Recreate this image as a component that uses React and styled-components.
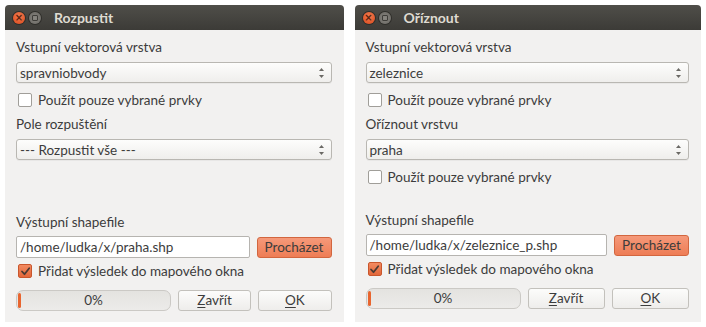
import React from 'react';
import styled, { createGlobalStyle } from 'styled-components';

const Global = createGlobalStyle`
  html, body { margin: 0; padding: 0; background: #ffffff; }
  body { font-family: Lato, "Open Sans", "DejaVu Sans", sans-serif; }
`;

function Arrows() {
  return (
    <svg width="7" height="12" viewBox="0 0 7 12">
      <path d="M3.5 1 L6 4 L1 4 Z" fill="#6a6864" />
      <path d="M3.5 11 L6 8 L1 8 Z" fill="#6a6864" />
    </svg>
  );
}

function Tick() {
  return (
    <svg width="11" height="11" viewBox="0 0 11 11">
      <path d="M2 5.5 L4.5 8.2 L9.2 2.2" fill="none" stroke="#4b3a33" strokeWidth="1.8" strokeLinecap="round" strokeLinejoin="round" />
    </svg>
  );
}

function Combo({ value }) {
  return (
    <ComboBox>
      <span>{value}</span>
      <Arrows />
    </ComboBox>
  );
}

function Check({ checked, children, mt }) {
  return (
    <CheckRow $mt={mt}>
      <Box $checked={checked}>{checked && <Tick />}</Box>
      <span>{children}</span>
    </CheckRow>
  );
}

function Dialog({ title, width, bottom, children, path }) {
  return (
    <Window $w={width}>
      <TitleBar>
        <Close>×</Close>
        <Mini />
        <Title>{title}</Title>
      </TitleBar>
      <Body $bottom={bottom}>
        {children}
        <Spacer />
        <Label $mb={5}>Výstupní shapefile</Label>
        <FileRow>
          <PathInput>{path}</PathInput>
          <Browse>Procházet</Browse>
        </FileRow>
        <Check checked mt={4}>Přidat výsledek do mapového okna</Check>
        <ButtonRow>
          <Progress>
            <Chunk />
            0%
          </Progress>
          <Btn><u>Z</u>avřít</Btn>
          <Btn><u>O</u>K</Btn>
        </ButtonRow>
      </Body>
    </Window>
  );
}

export default function App() {
  return (
    <>
      <Global />
      <Screen>
        <Dialog title="Rozpustit" width={339} bottom={11} path="/home/ludka/x/praha.shp">
          <Label>Vstupní vektorová vrstva</Label>
          <Combo value="spravniobvody" />
          <Check mt={8}>Použít pouze vybrané prvky</Check>
          <Label $mt={6}>Pole rozpuštění</Label>
          <Combo value="--- Rozpustit vše ---" />
        </Dialog>
        <Dialog title="Oříznout" width={347} bottom={13} path="/home/ludka/x/zeleznice_p.shp">
          <Label>Vstupní vektorová vrstva</Label>
          <Combo value="zeleznice" />
          <Check mt={8}>Použít pouze vybrané prvky</Check>
          <Label $mt={6}>Oříznout vrstvu</Label>
          <Combo value="praha" />
          <Check mt={8}>Použít pouze vybrané prvky</Check>
        </Dialog>
      </Screen>
    </>
  );
}

const Screen = styled.div`
  display: flex;
  gap: 11px;
  padding: 5px;
  height: 317px;
`;

const Window = styled.div`
  width: ${p => p.$w}px;
  height: 317px;
  display: flex;
  flex-direction: column;
  background: #f2f1f0;
  border-radius: 4px 4px 0 0;
  overflow: hidden;
`;

const TitleBar = styled.div`
  height: 25px;
  flex-shrink: 0;
  display: flex;
  align-items: center;
  padding-left: 8px;
  background: linear-gradient(#4f4e49, #3c3b37);
`;

const Close = styled.div`
  width: 12px;
  height: 12px;
  border-radius: 50%;
  background: radial-gradient(circle at 50% 35%, #f27b50, #d9491c);
  box-shadow: 0 0 0 1px #2f2e2a;
  color: #5a2410;
  font: bold 10px/12px "DejaVu Sans", sans-serif;
  text-align: center;
`;

const Mini = styled.div`
  width: 12px;
  height: 12px;
  margin-left: 4px;
  border-radius: 50%;
  background: radial-gradient(circle, #8a8882, #66645f);
  box-shadow: 0 0 0 1px #2f2e2a;
  position: relative;
  &::after {
    content: '';
    position: absolute;
    left: 3px;
    top: 3px;
    width: 4px;
    height: 4px;
    border: 1px solid #3e3d39;
    border-radius: 1px;
  }
`;

const Title = styled.div`
  margin-left: 13px;
  color: #dfdbd2;
  font-weight: bold;
  font-size: 14px;
`;

const Body = styled.div`
  flex: 1;
  display: flex;
  flex-direction: column;
  padding: 8px 12px ${p => p.$bottom}px 11px;
  color: #3c3c3c;
  font-size: 13.5px;
`;

const Label = styled.div`
  height: 18px;
  line-height: 18px;
  margin-top: ${p => p.$mt || 0}px;
  margin-bottom: ${p => p.$mb || 0}px;
`;

const ComboBox = styled.div`
  margin-top: 6px;
  height: 19px;
  display: flex;
  align-items: center;
  justify-content: space-between;
  padding: 0 6px 0 3px;
  border: 1px solid #b9b7b2;
  border-radius: 3px;
  background: linear-gradient(#fdfdfc, #efeeec);
  box-shadow: 0 1px 0 rgba(0, 0, 0, 0.04);
`;

const CheckRow = styled.div`
  margin-top: ${p => p.$mt}px;
  height: 18px;
  display: flex;
  align-items: center;
  gap: 6px;
  padding-left: 2px;
`;

const Box = styled.div`
  width: 12px;
  height: 12px;
  border-radius: 2px;
  border: 1px solid ${p => (p.$checked ? '#c9562c' : '#a09e99')};
  background: ${p => (p.$checked ? 'linear-gradient(#f28a60, #e2673a)' : '#ffffff')};
  display: flex;
  align-items: center;
  justify-content: center;
`;

const Spacer = styled.div`
  flex: 1;
`;

const FileRow = styled.div`
  display: flex;
  align-items: center;
  gap: 7px;
`;

const PathInput = styled.div`
  flex: 1;
  height: 20px;
  line-height: 20px;
  padding: 0 3px;
  background: #ffffff;
  border: 1px solid #b6b4b0;
  border-radius: 2px;
`;

const Browse = styled.div`
  width: 73px;
  height: 19px;
  line-height: 19px;
  text-align: center;
  border: 1px solid #d2663f;
  border-radius: 3px;
  background: linear-gradient(#f5997a, #ee7d55);
`;

const ButtonRow = styled.div`
  margin-top: 10px;
  display: flex;
  gap: 7px;
  height: 21px;
`;

const Progress = styled.div`
  flex: 0 0 155px;
  position: relative;
  border: 1px solid #cbc9c5;
  border-radius: 7px;
  background: linear-gradient(#e4e3e0, #ecebe9);
  text-align: center;
  line-height: 19px;
  box-sizing: border-box;
`;

const Chunk = styled.div`
  position: absolute;
  left: 1px;
  top: 2px;
  width: 3px;
  height: 15px;
  border-radius: 2px;
  background: #e8652f;
`;

const Btn = styled.div`
  flex: 1;
  border: 1px solid #c3c1bc;
  border-radius: 3px;
  background: linear-gradient(#fcfcfb, #eeedeb);
  text-align: center;
  line-height: 19px;
  box-sizing: border-box;
  u { text-decoration-thickness: 1px; text-underline-offset: 2px; }
`;
